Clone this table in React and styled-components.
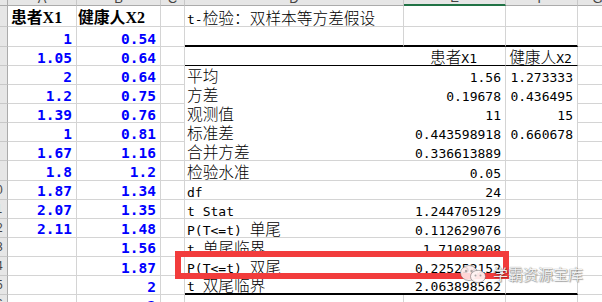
import React from 'react';
import styled, { createGlobalStyle } from 'styled-components';

// Page reset
const GlobalStyle = createGlobalStyle`
  html, body {
    margin: 0;
    padding: 0;
    background: #fff;
    overflow: hidden;
  }
`;

// Sheet data
const COLS = ['A', 'B', 'C', 'D', 'E', 'F', 'G'];

const aVals = ['1', '1.05', '2', '1.2', '1.39', '1', '1.67', '1.8', '1.87', '2.07', '2.11'];
const bVals = ['0.54', '0.64', '0.64', '0.75', '0.76', '0.81', '1.16', '1.2', '1.34', '1.35', '1.48', '1.56', '1.87', '2', '2'];

const stats = [
  ['平均', '1.56', '1.273333'],
  ['方差', '0.19678', '0.436495'],
  ['观测值', '11', '15'],
  ['标准差', '0.443598918', '0.660678'],
  ['合并方差', '0.336613889'],
  ['检验水准', '0.05'],
  ['df', '24'],
  ['t Stat', '1.244705129'],
  ['P(T<=t) 单尾', '0.112629076'],
  ['t 单尾临界', '1.71088208'],
  ['P(T<=t) 双尾', '0.225252152'],
  ['t 双尾临界', '2.063898562'],
];

const edges = {
  grid: '1px solid #d4d4d4',
  heavy: '2px solid #000',
  rule: '1px solid #000',
  open: '0',
};

// Styled components
const Sheet = styled.div`
  position: relative;
  width: 602px;
  height: 302px;
  overflow: hidden;
  background: #fff;
`;

const Grid = styled.div`
  display: grid;
  grid-template-columns: 8px 69px 84px 24px 219px 102px 72px 40px;
  grid-template-rows: 6px 21px 20px 19px repeat(13, 19.1px);
`;

const ColHead = styled.div`
  box-sizing: border-box;
  display: flex;
  align-items: flex-end;
  justify-content: center;
  overflow: hidden;
  background: #e6e6e6;
  border-right: 1px solid ${p => (p.$corner ? '#ababab' : '#c8c8c8')};
  border-bottom: ${p => (p.$selected ? '2px solid #217346' : '1px solid #ababab')};
  font-family: "Liberation Sans", Arial, sans-serif;
  font-size: 13px;
  line-height: 13px;
  color: #444;
`;

const RowHead = styled.div`
  box-sizing: border-box;
  display: flex;
  align-items: center;
  justify-content: flex-end;
  overflow: hidden;
  background: #e6e6e6;
  border-right: 1px solid #ababab;
  border-bottom: 1px solid #c8c8c8;
  span {
    flex: none;
    width: 22px;
    text-align: center;
    font-family: "Liberation Sans", Arial, sans-serif;
    font-size: 12px;
    color: #444;
  }
`;

const Cell = styled.div`
  box-sizing: border-box;
  display: flex;
  align-items: flex-end;
  justify-content: ${p => (p.$align === 'right' ? 'flex-end' : p.$align === 'center' ? 'center' : 'flex-start')};
  min-width: 0;
  padding: 0 4px ${p => (p.$edge === 'open' ? 1 : 0)}px 2px;
  white-space: nowrap;
  border-right: ${p => (p.$noRight ? '0' : '1px solid #d4d4d4')};
  border-bottom: ${p => edges[p.$edge || 'grid']};
  font-family: "DejaVu Sans Mono", "Liberation Mono", monospace;
  font-size: 13px;
  line-height: 13px;
  color: #000;
`;

const NumCell = styled(Cell)`
  font-size: 14.5px;
  line-height: 14.5px;
  font-weight: bold;
  color: #0000ff;
`;

const HeadCell = styled(Cell)`
  padding-left: ${p => p.$indent ?? 3}px;
  font-family: "Liberation Serif", serif;
  font-size: 16px;
  line-height: 16px;
  font-weight: bold;
`;

const Line = styled.span`
  display: block;
`;

const Han = styled.span`
  font-family: "Noto Sans CJK SC", sans-serif;
  font-size: ${p => (p.$bold ? 15.8 : 15.7)}px;
  font-weight: ${p => (p.$bold ? 700 : 300)};
  line-height: 0;
`;

const Mark = styled.div`
  position: absolute;
  left: 175px;
  top: 251px;
  width: 334px;
  height: 28px;
  box-sizing: border-box;
  border: 6px solid #f23c3c;
`;

const Watermark = styled.div`
  position: absolute;
  left: 459px;
  top: 264px;
  display: flex;
  align-items: center;
  gap: 6px;
  font-family: "Noto Sans CJK SC", sans-serif;
  font-size: 15px;
  line-height: 18px;
  color: rgba(255, 255, 255, 0.92);
  text-shadow: 0 0 1px rgba(0, 0, 0, 0.6), 1px 1px 1px rgba(0, 0, 0, 0.3);
`;

// Mixed latin / CJK text, CJK runs use full-width glyphs
function Mixed({ text, bold }) {
  if (!text) return null;
  const parts = text.split(/([\u3000-\u303f\u4e00-\u9fff\uff00-\uffef]+)/);
  return (
    <Line>
      {parts.map((p, i) => (i % 2 ? <Han key={i} $bold={bold}>{p}</Han> : p))}
    </Line>
  );
}

function tableEdge(r) {
  if (r === 2 || r === 15) return 'heavy';
  if (r === 3) return 'rule';
  if (r >= 4 && r <= 7) return 'open';
  return undefined;
}

function SheetRow({ r }) {
  const edge = tableEdge(r);
  const stat = r >= 4 && r <= 15 ? stats[r - 4] : null;
  const inTable = r >= 3 && r <= 15;

  let d = null;
  if (r === 1) d = 't-检验：双样本等方差假设';
  else if (stat) d = stat[0];

  return (
    <>
      <RowHead><span>{r}</span></RowHead>
      {r === 1
        ? <HeadCell><Mixed text='患者X1' bold /></HeadCell>
        : <NumCell $align='right'>{aVals[r - 2]}</NumCell>}
      {r === 1
        ? <HeadCell $indent={1}><Mixed text='健康人X2' bold /></HeadCell>
        : <NumCell $align='right'>{bVals[r - 2]}</NumCell>}
      <Cell />
      <Cell $edge={edge} $noRight={inTable}><Mixed text={d} /></Cell>
      <Cell $edge={edge} $align={r === 3 ? 'center' : 'right'}>
        <Mixed text={r === 3 ? '患者X1' : stat && stat[1]} />
      </Cell>
      <Cell $edge={edge} $align={r === 3 ? 'center' : 'right'}>
        <Mixed text={r === 3 ? '健康人X2' : stat && stat[2]} />
      </Cell>
      <Cell />
    </>
  );
}

function WeChatIcon() {
  return (
    <svg width='28' height='20' viewBox='0 0 28 20'>
      <ellipse cx='10' cy='9' rx='8.5' ry='7.5' fill='rgba(255,236,236,0.88)' stroke='rgba(80,80,80,0.45)' />
      <ellipse cx='19' cy='12.5' rx='7.5' ry='6.2' fill='rgba(255,244,244,0.92)' stroke='rgba(80,80,80,0.45)' />
      <circle cx='7' cy='7' r='1.2' fill='rgba(120,120,120,0.6)' />
      <circle cx='12.5' cy='7' r='1.2' fill='rgba(120,120,120,0.6)' />
      <circle cx='16.5' cy='11.5' r='1' fill='rgba(120,120,120,0.6)' />
      <circle cx='21.5' cy='11.5' r='1' fill='rgba(120,120,120,0.6)' />
    </svg>
  );
}

export default function App() {
  const rows = Array.from({ length: 16 }, (_, i) => i + 1);
  return (
    <Sheet>
      <GlobalStyle />
      <Grid>
        <ColHead $corner />
        {COLS.map(c => (
          <ColHead key={c} $selected={c === 'E'}>{c}</ColHead>
        ))}
        {rows.map(r => (
          <SheetRow key={r} r={r} />
        ))}
      </Grid>
      <Mark />
      <Watermark>
        <WeChatIcon />
        <span>学霸资源宝库</span>
      </Watermark>
    </Sheet>
  );
}
